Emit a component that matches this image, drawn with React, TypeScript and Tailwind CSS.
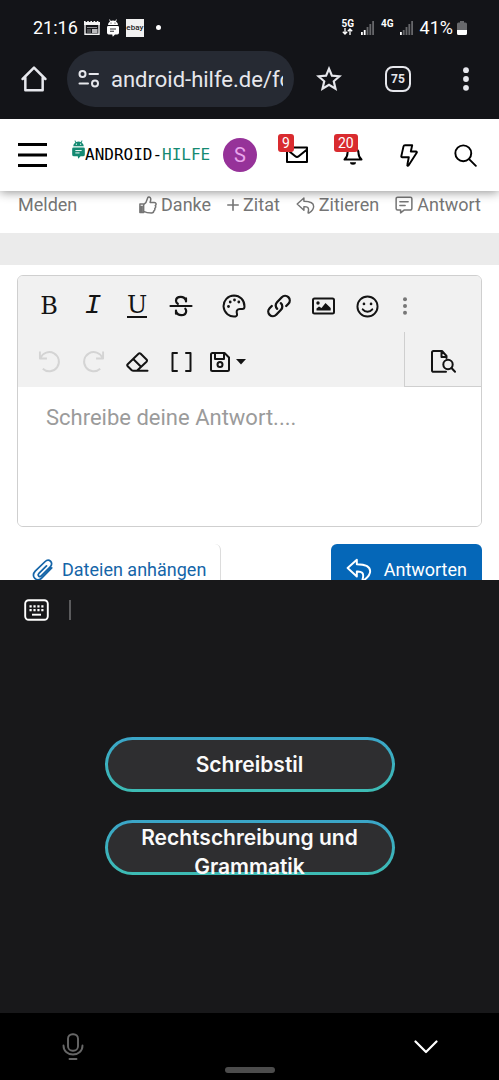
import type { ReactNode } from 'react'

interface IconProps {
  className?: string
  box?: string
  sw?: number
  children: ReactNode
}

function Icon({ className = 'size-6', box = '0 0 24 24', sw = 2, children }: IconProps) {
  return (
    <svg
      viewBox={box}
      className={`shrink-0 ${className}`}
      fill="none"
      stroke="currentColor"
      strokeWidth={sw}
      strokeLinecap="round"
      strokeLinejoin="round"
      aria-hidden="true"
    >
      {children}
    </svg>
  )
}

/* Robot head on a speech bubble, used in the status bar and the site logo */
function Robot({ className, line }: { className: string; line: string }) {
  return (
    <svg viewBox="0 0 24 36" className={`shrink-0 ${className}`} fill="currentColor" aria-hidden="true">
      <path d="M2 12a10 9 0 0 1 4-7.2L4.400 1.500l1.300-.8L7.400 4a11 11 0 0 1 9.200 0l1.700-3.300 1.300.8L18 4.800A10 9 0 0 1 22 12z" />
      <path d="M2.500 14h19A2.500 2.500 0 0 1 24 16.500v11a3.500 3.500 0 0 1-3.500 3.500H16l-4.500 4.500-1-4.500h-7A3.500 3.500 0 0 1 0 27.500v-11A2.500 2.500 0 0 1 2.500 14z" />
      <circle cx="8" cy="8" r="1.200" fill={line} />
      <circle cx="16" cy="8" r="1.200" fill={line} />
      <path d="M6 20h12M6 24.500h8" stroke={line} strokeWidth="1.800" />
    </svg>
  )
}

function Signal({ active }: { active: number }) {
  return (
    <svg viewBox="0 0 14 14" className="size-3.5" aria-hidden="true">
      {[3, 5, 8, 11, 14].map((h, i) => (
        <rect key={h} x={i * 2.8} y={14 - h} width="1.800" height={h} fill={i < active ? '#fff' : '#66676a'} />
      ))}
    </svg>
  )
}

const Reply = ({ className, sw = 1.6 }: { className: string; sw?: number }) => (
  <Icon className={className} sw={sw}>
    <path d="M10 2.500 1.500 10.200 10 18v-4.600c4.200-.2 7.200.9 5.300 7.200-.2.900.6 1.300 1.200.8 3.500-2.400 5.800-5 5.800-8.200 0-5-5-6.400-12.300-6.500z" />
  </Icon>
)

function StatusBar() {
  return (
    <div className="flex h-[51px] items-center justify-between pt-1 pr-8 pl-[33px] text-lg text-white">
      <div className="flex items-center">
        <span>21:16</span>
        <svg viewBox="0 0 16 14" className="ml-1.5 h-3.5 w-4" aria-hidden="true">
          <path d="M1 1.500v11.700h14V1.500" fill="none" stroke="#f3f3f3" strokeWidth="1.400" />
          <path d="M0 0h1.600v1h1.600V0h1.600v1h1.600V0H8v1h1.600V0h1.600v1h1.600V0h1.600v1H16v3H0z" fill="#f3f3f3" />
          <path d="M3 6h10v1H3zM3 8.500h4v1H3zM3 10.500h4v1H3z" fill="#8d8d90" />
          <path d="M8 8h5.500v4H8z" fill="#b9b9bb" />
        </svg>
        <Robot className="ml-[7px] h-[18px] w-3" line="#15161a" />
        <span className="ml-[7px] flex size-[18px] items-center justify-center bg-[#f1f1f1] text-[8px] leading-none font-medium text-[#222]">
          ebay
        </span>
        <span className="ml-3 size-[5px] rounded-full bg-white" />
      </div>
      <div className="flex items-center">
        <div className="flex flex-col items-center text-[10px] leading-[8px] font-bold">
          5G
          <svg viewBox="0 0 11 7" className="h-[7px] w-[11px]" fill="none" stroke="#fff" strokeWidth="1.300" aria-hidden="true">
            <path d="M3 0v6M.8 3.800 3 6l2.200-2.200M8 7V1M5.800 3.200 8 1l2.200 2.200" />
          </svg>
        </div>
        <div className="ml-[7px]"><Signal active={2} /></div>
        <span className="mr-1.5 mb-2 ml-1.5 text-[10px] leading-none font-bold">4G</span>
        <Signal active={1} />
        <span className="ml-1.5">41%</span>
        <svg viewBox="0 0 10 14" className="ml-1 h-3.5 w-2.5" aria-hidden="true">
          <path d="M3 0h4v1.500h1.500A1.500 1.500 0 0 1 10 3v6H0V3a1.500 1.500 0 0 1 1.500-1.500H3z" fill="#68696c" />
          <path d="M0 9h10v3.500a1.500 1.500 0 0 1-1.500 1.500h-7A1.500 1.500 0 0 1 0 12.500z" fill="#fff" />
        </svg>
      </div>
    </div>
  )
}

function BrowserBar() {
  return (
    <div className="flex items-center pb-3 text-[#e6e7ec]">
      <button aria-label="Startseite" className="flex w-[67px] justify-center">
        <Icon className="size-[26px]" sw={2.3}>
          <path d="M1.500 12 12 1.500 22.500 12M4 10.500v11.800h16V10.500" />
        </Icon>
      </button>
      <div className="flex h-14 min-w-0 flex-1 items-center gap-3 rounded-full bg-[#262a33] pr-[11px] pl-[11px]">
        <Icon className="h-[18px] w-[21px]" box="0 0 21 18" sw={2}>
          <circle cx="4.500" cy="4" r="3" />
          <path d="M11.500 4H20M1.500 13.500H10" />
          <circle cx="17" cy="13.500" r="3" />
        </Icon>
        <input
          aria-label="Adresse"
          defaultValue="android-hilfe.de/fo"
          className="w-0 min-w-0 flex-1 bg-transparent text-[22px] outline-none"
        />
      </div>
      <button aria-label="Lesezeichen" className="flex w-[70px] justify-center">
        <Icon className="size-[26px]" sw={2}>
          <path strokeLinejoin="miter" d="m12 2.500 2.700 6.400 7 .6-5.300 4.600 1.600 6.800-6-3.600-6 3.600 1.600-6.800-5.300-4.600 7-.6z" />
        </Icon>
      </button>
      <button aria-label="Tabs" className="flex w-17 justify-center">
        <span className="flex size-[26px] items-center justify-center rounded-lg border-2 border-current text-xs font-bold">75</span>
      </button>
      <button aria-label="Menü" className="flex w-[67px] justify-center">
        <svg viewBox="0 0 6 24" className="h-6 w-1.5" fill="currentColor" aria-hidden="true">
          <circle cx="3" cy="3.200" r="2.900" />
          <circle cx="3" cy="12" r="2.900" />
          <circle cx="3" cy="20.800" r="2.900" />
        </svg>
      </button>
    </div>
  )
}

function Badge({ children }: { children: ReactNode }) {
  return (
    <span className="absolute -top-[10px] -left-2 rounded-[3px] bg-[#d92b2f] px-1 text-sm leading-[18px] text-white">
      {children}
    </span>
  )
}

function SiteHeader() {
  return (
    <header className="relative z-10 flex h-[72px] items-center bg-white pr-1.5 pl-[18px] text-black shadow-[0_1px_10px_rgba(0,0,0,0.45)]">
      <button aria-label="Navigation">
        <Icon className="h-[26px] w-[29px]" box="0 0 29 26" sw={3}>
          <path strokeLinecap="butt" d="M0 2.500h29M0 13h29M0 23.500h29" />
        </Icon>
      </button>
      <a href="#start" className="ml-[25px] flex items-center font-['DejaVu_Sans_Mono',monospace] text-base leading-5 whitespace-nowrap">
        <Robot className="mb-3 h-[19px] w-[13px] text-[#148a72]" line="#fff" />
        <span>
          ANDROID-<span className="text-[#148a72]">HILFE</span>
        </span>
      </a>
      <div className="ml-auto flex items-center">
        <a href="#konto" className="mr-3 flex size-[34px] items-center justify-center rounded-full bg-[#963299] text-xl text-[#e9a5ec]">
          S
        </a>
        <a href="#nachrichten" aria-label="Nachrichten" className="flex w-14 justify-center">
          <span className="relative">
            <Icon className="size-[22px]" box="0 0 22 22" sw={2}>
              <path d="M1 3.500h20V18H1zM1 5.500l8.300 6.800a2.700 2.700 0 0 0 3.400 0L21 5.500" />
            </Icon>
            <Badge>9</Badge>
          </span>
        </a>
        <a href="#hinweise" aria-label="Hinweise" className="flex w-14 justify-center">
          <span className="relative">
            <Icon className="size-[22px]" box="0 0 22 22" sw={2}>
              <path d="M11 1v2M2.500 15.500h17c-2.200-2-3-3.500-3-6.500a5.500 5.500 0 0 0-11 0c0 3-.8 4.500-3 6.500z" />
              <path d="M8 18.200h6a3 2.500 0 0 1-6 0z" fill="currentColor" stroke="none" />
            </Icon>
            <Badge>20</Badge>
          </span>
        </a>
        <a href="#neu" aria-label="Neue Beiträge" className="flex w-14 justify-center">
          <Icon className="h-[23px] w-[18px]" box="0 0 18 23" sw={1.9}>
            <path d="M5 1.200h7.200L10.800 7.500H16c.8 0 1.100.7.700 1.300L8.500 21.500c-.5.700-1.400.4-1.200-.5l1.500-7.800H2.200c-.6 0-1-.4-.9-1L3.500 2.400C3.700 1.500 4.200 1.200 5 1.200z" />
          </Icon>
        </a>
        <button aria-label="Suche" className="flex w-14 justify-center">
          <Icon className="size-[23px]" sw={2}>
            <circle cx="9.700" cy="9.700" r="8.300" />
            <path d="m16 16 6.800 6.800" />
          </Icon>
        </button>
      </div>
    </header>
  )
}

function PostActions() {
  return (
    <div className="flex items-center justify-between px-[18px] pt-1 pb-[18px] text-lg leading-5 text-[#757575]">
      <a href="#melden">Melden</a>
      <div className="flex items-center gap-4">
        <a href="#danke" className="flex items-center gap-1">
          <Icon className="size-[18px]" sw={2}>
            <path d="M1.200 10.500h5V22h-5zM6.200 11.500c3-2 4.300-4.500 5-8 .3-1.600 1-2.300 2.300-2.100 2.400.4 2.800 3 1.300 7.100h5.700c2.500 0 3 3 1.200 4.200 1 1.500.6 3-.7 3.800.5 1.600 0 2.700-1.200 3.300 0 2-1.100 2.900-3.300 2.900-4.500 0-7-.4-10.300-2.200" />
            <path d="M1.200 13h4v9h-4z" fill="currentColor" stroke="none" />
          </Icon>
          Danke
        </a>
        <a href="#zitat" className="flex items-center gap-1">
          <Icon className="size-3" box="0 0 12 12" sw={1.6}>
            <path d="M6 .8v10.400M.8 6h10.400" />
          </Icon>
          Zitat
        </a>
        <a href="#zitieren" className="flex items-center gap-1">
          <Reply className="size-[19px]" sw={1.8} />
          Zitieren
        </a>
        <a href="#antwort" className="flex items-center gap-1">
          <Icon className="size-[18px]" sw={2}>
            <path d="M3.500 1.500h17a2 2 0 0 1 2 2v13a2 2 0 0 1-2 2h-8L7.500 22.500v-4h-4a2 2 0 0 1-2-2v-13a2 2 0 0 1 2-2zM6.500 7.500h11M6.500 12.500h7" />
          </Icon>
          Antwort
        </a>
      </div>
    </div>
  )
}

function Tool({ label, children, className = 'w-11' }: { label: string; children: ReactNode; className?: string }) {
  return (
    <button aria-label={label} className={`flex items-center justify-center ${className}`}>
      {children}
    </button>
  )
}

function Editor() {
  return (
    <div className="mx-[17px] mt-2.5 overflow-hidden rounded-md border border-[#cfcfcf]">
      <div className="bg-[#f1f1f1] pt-1 text-[#141414]">
        <div className="flex h-[52px] pl-[9px]">
          <Tool label="Fett"><span className="font-['DejaVu_Serif',serif] text-2xl leading-none">B</span></Tool>
          <Tool label="Kursiv"><span className="font-['Liberation_Mono',monospace] text-[28px] leading-none italic">I</span></Tool>
          <Tool label="Unterstrichen">
            <span className="border-b-2 border-current font-['DejaVu_Serif',serif] text-2xl leading-[22px]">U</span>
          </Tool>
          <Tool label="Durchgestrichen">
            <Icon className="size-6" sw={2.2}>
              <path d="M1.500 12h21M17 7.500V4.300M17 6.500C16 4 14.200 2.800 11.800 2.800 8.800 2.800 7 4.500 7 6.800c0 1.500.7 2.300 1.800 3M7 16.500v3.200M7 17.500c1 2.500 2.800 3.700 5.200 3.700 3 0 5-1.700 5-4.200 0-1-.3-1.700-.9-2.300" />
            </Icon>
          </Tool>
          <Tool label="Farbe" className="ml-2 w-[45px]">
            <Icon className="size-6" sw={2}>
              <path d="M12 1.500A10.500 10.500 0 1 0 13.500 22.400c1.500-.3 1.800-1.500 1.400-3-.7-2.500.3-4.400 2.900-4.400h2.500c1.500 0 2.200-1 2.200-2.500C22.500 6 17.800 1.500 12 1.500z" />
              <g fill="currentColor" stroke="none">
                <circle cx="6.500" cy="12.500" r="1.400" />
                <circle cx="8.200" cy="8" r="1.400" />
                <circle cx="12.500" cy="6" r="1.400" />
                <circle cx="16.800" cy="8" r="1.400" />
              </g>
            </Icon>
          </Tool>
          <Tool label="Link" className="w-[45px]">
            <Icon className="size-6" sw={2.3}>
              <path d="M10.200 14.800a4.600 4.600 0 0 1-.2-6.600l4.800-5a4.600 4.600 0 0 1 6.600 6.500l-2.200 2.300" />
              <path d="M13.800 9.200a4.600 4.600 0 0 1 .2 6.600l-4.800 5a4.600 4.600 0 0 1-6.600-6.500L4.800 12" />
            </Icon>
          </Tool>
          <Tool label="Bild" className="w-11">
            <Icon className="h-[18px] w-[23px]" box="0 0 23 18" sw={2}>
              <rect x="1" y="1.500" width="21" height="15" rx="1.500" />
              <circle cx="6" cy="6" r="1.700" fill="currentColor" stroke="none" />
              <path d="M4.500 13.500v-2l2.500-2 2.500 1.500 4-5 5.200 5v2.500z" fill="currentColor" stroke="none" />
            </Icon>
          </Tool>
          <Tool label="Smileys" className="w-11">
            <Icon className="size-[23px]" sw={2}>
              <circle cx="12" cy="12" r="10.500" />
              <path d="M7 15c2.500 3.200 7.500 3.200 10 0" />
              <circle cx="8.300" cy="9.300" r="1.400" fill="currentColor" stroke="none" />
              <circle cx="15.700" cy="9.300" r="1.400" fill="currentColor" stroke="none" />
            </Icon>
          </Tool>
          <Tool label="Mehr" className="w-8">
            <svg viewBox="0 0 4 18" className="h-[18px] w-1 text-[#777]" fill="currentColor" aria-hidden="true">
              <circle cx="2" cy="2.200" r="2" />
              <circle cx="2" cy="9" r="2" />
              <circle cx="2" cy="15.800" r="2" />
            </svg>
          </Tool>
        </div>
        <div className="flex h-[55px]">
          <div className="flex flex-1 pt-1 pl-[9px]">
            <Tool label="Rückgängig" className="w-11 text-[#d4d4d4]">
              <Icon className="size-[23px]" sw={2}>
                <path strokeLinecap="butt" d="M2 1.500v7.300h7.300M2.600 8.300A10 10 0 1 1 5 19.500" />
              </Icon>
            </Tool>
            <Tool label="Wiederholen" className="w-11 text-[#d4d4d4]">
              <Icon className="size-[23px]" sw={2}>
                <path strokeLinecap="butt" d="M22 1.500v7.300h-7.300M21.400 8.300A10 10 0 1 0 19 19.500" />
              </Icon>
            </Tool>
            <Tool label="Formatierung entfernen">
              <Icon className="h-5 w-[23px]" box="0 0 23 20" sw={2}>
                <path d="M12.500 1.800 1.700 12.200c-.7.700-.7 1.300 0 2L5.500 18c.6.600 1.200.8 2 .8h14M12.500 1.800c.7-.7 1.500-.7 2.200 0l5.800 5.700c.7.700.7 1.500 0 2.200L11.200 18.500M7.200 7l7.800 7.800" />
              </Icon>
            </Tool>
            <Tool label="BB-Code umschalten">
              <Icon className="h-5 w-[21px]" box="0 0 21 20" sw={2}>
                <path d="M6 1H1.500v18H6M15 1h4.500v18H15" />
              </Icon>
            </Tool>
            <Tool label="Entwürfe" className="w-[50px] gap-1.5">
              <Icon className="size-5" box="0 0 20 20" sw={2}>
                <path d="M2.500 1h12L19 5.500v12a1.500 1.500 0 0 1-1.500 1.500h-15A1.500 1.500 0 0 1 1 17.500v-15A1.500 1.500 0 0 1 2.500 1zM5 1.500V7h9V1.500" />
                <circle cx="10" cy="12.500" r="2.500" />
              </Icon>
              <svg viewBox="0 0 10 6" className="h-1.5 w-2.5" fill="currentColor" aria-hidden="true"><path d="M0 0h10L5 5.500z" /></svg>
            </Tool>
          </div>
          <Tool label="Vorschau" className="w-[77px] border-b border-l border-[#cfcfcf] pt-1">
            <Icon className="h-[23px] w-[25px]" box="0 0 25 23" sw={2}>
              <path d="M15 21.800H2.500A1.300 1.300 0 0 1 1 20.500v-18A1.500 1.500 0 0 1 2.500 1H11l4.500 5v2M10.500 1.500V7h5" />
              <circle cx="17" cy="14.500" r="4.700" />
              <path d="m20.500 18 3.500 3.800" />
            </Icon>
          </Tool>
        </div>
      </div>
      <textarea
        aria-label="Antwort"
        placeholder="Schreibe deine Antwort...."
        className="block h-[139px] w-full resize-none bg-white px-7 py-[17px] text-[22px] leading-7 outline-none placeholder:text-[#9b9b9b]"
      />
    </div>
  )
}

function Keyboard() {
  return (
    <section className="shrink-0 bg-[#18181a]">
      <div className="flex h-[60px] items-center gap-5 pl-6 text-white">
        <button aria-label="Tastatur">
          <Icon className="h-[22px] w-[25px]" box="0 0 25 22" sw={1.9}>
            <rect x="1.200" y="1.200" width="22.600" height="19.600" rx="3.500" />
            <path strokeLinecap="butt" d="M5.500 7.300h14M5.500 11.200h14" strokeDasharray="2.200 1.730" strokeWidth="2.200" />
            <path strokeLinecap="butt" d="M8 15.700h9" />
          </Icon>
        </button>
        <span className="h-5 w-0.5 bg-[#5b5b5d]" />
      </div>
      <div className="flex flex-col items-center gap-7 pt-[97px] pb-[138px] font-[Inter,sans-serif] text-[21px] leading-[29px] font-semibold text-[#fafafa]">
        {['Schreibstil', 'Rechtschreibung und Grammatik'].map(label => (
          <button key={label} className="h-[55px] w-[290px] rounded-full bg-linear-to-b from-[#3ba5c8] to-[#3dbcb4] p-[3px]">
            <span className="flex h-full items-center-safe justify-center rounded-full bg-[#2e2e30] px-4">
              {label}
            </span>
          </button>
        ))}
      </div>
    </section>
  )
}

function NavBar() {
  return (
    <nav className="flex shrink-0 flex-col items-center gap-1.5 bg-black pt-5 pb-[7px]">
      <div className="flex h-7 w-full items-center justify-between pr-[61px] pl-[62px]">
        <button aria-label="Spracheingabe" className="text-[#676767]">
          <Icon className="h-7 w-[22px]" box="0 0 22 28" sw={1.9}>
            <rect x="6" y="1.200" width="10" height="16.500" rx="4.500" />
            <path d="M1.500 12.500c0 5.500 4 9 9.500 9s9.500-3.500 9.500-9M7.500 26h7" />
          </Icon>
        </button>
        <button aria-label="Tastatur schließen" className="text-white">
          <Icon className="h-[14px] w-6" box="0 0 24 14" sw={2.2}>
            <path d="M1.500 1.500 12 12 22.500 1.500" />
          </Icon>
        </button>
      </div>
      <span className="h-1.5 w-[50px] rounded-full bg-[#4c4c4c]" />
    </nav>
  )
}

export default function App() {
  return (
    <div className="flex h-screen flex-col overflow-hidden bg-white font-[Roboto,sans-serif]">
      <div className="shrink-0 bg-[#131418]">
        <StatusBar />
        <BrowserBar />
      </div>
      <main className="min-h-0 flex-1 overflow-hidden">
        <SiteHeader />
        <PostActions />
        <div className="h-8 bg-[#ebebeb]" />
        <Editor />
        <div className="mx-[17px] mt-[17px] flex justify-between text-lg">
          <button className="flex h-[51px] items-center gap-2 rounded-md border-r border-[#dcdcdc] pr-3.5 pl-[15px] text-[#1565a8]">
            <Icon className="size-[22px]" sw={1.9}>
              <path d="m15.800 7.500-8.300 8.300c-1.900 2 .7 4.500 2.600 2.600l9.800-9.900c4.300-4.500-1.500-9.800-5.800-5.500L3.500 13.300c-5.500 5.800 2 12.500 7.300 7.300l10.700-10.800" />
            </Icon>
            Dateien anhängen
          </button>
          <button className="flex h-[51px] items-center gap-3 rounded-md bg-[#0567b8] px-[15px] text-white">
            <Reply className="size-[26px]" sw={1.8} />
            Antworten
          </button>
        </div>
      </main>
      <Keyboard />
      <NavBar />
    </div>
  )
}
